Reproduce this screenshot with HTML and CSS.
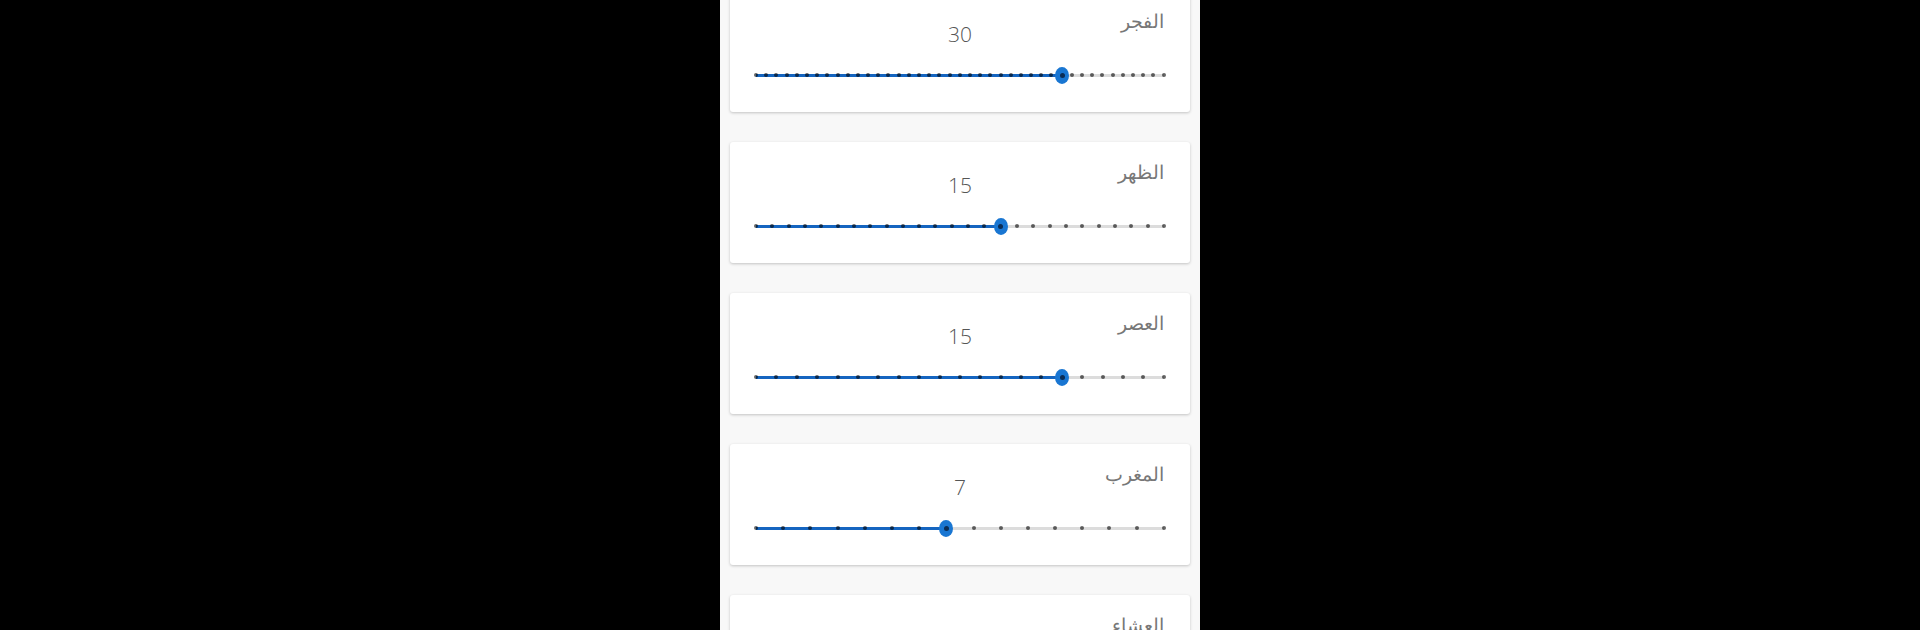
FILE: index.html
```html
<!DOCTYPE html>
<html lang="ar">
<head>
  <meta charset="utf-8">
  <meta name="viewport" content="width=device-width">
  <title>Prayer offsets</title>
  <link rel="stylesheet" href="styles.css">
</head>
<body>
  <main class="panel">
    <div class="list">
      <section class="card">
        <div class="card-head">
          <span class="value">30</span>
          <h2 class="title">الفجر</h2>
        </div>
        <div class="slider" data-max="40" data-value="30"></div>
      </section>

      <section class="card">
        <div class="card-head">
          <span class="value">15</span>
          <h2 class="title">الظهر</h2>
        </div>
        <div class="slider" data-max="25" data-value="15"></div>
      </section>

      <section class="card">
        <div class="card-head">
          <span class="value">15</span>
          <h2 class="title">العصر</h2>
        </div>
        <div class="slider" data-max="20" data-value="15"></div>
      </section>

      <section class="card">
        <div class="card-head">
          <span class="value">7</span>
          <h2 class="title">المغرب</h2>
        </div>
        <div class="slider" data-max="15" data-value="7"></div>
      </section>

      <section class="card">
        <div class="card-head">
          <span class="value">10</span>
          <h2 class="title">العشاء</h2>
        </div>
        <div class="slider" data-max="20" data-value="10"></div>
      </section>
    </div>
  </main>

  <script>
    document.querySelectorAll(".slider").forEach(function(el){
      let max = +el.dataset.max;
      let val = +el.dataset.value;
      let pct = val / max * 100;

      let track = document.createElement("div");
      track.className = "track";

      let fill = document.createElement("div");
      fill.className = "fill";
      fill.style.width = pct + "%";
      track.appendChild(fill);

      let ticks = document.createElement("div");
      ticks.className = "ticks";
      for(let i = 0; i <= max; i++){
        let t = document.createElement("span");
        t.className = "tick";
        ticks.appendChild(t);
      }
      track.appendChild(ticks);

      let thumb = document.createElement("span");
      thumb.className = "thumb";
      thumb.style.left = pct + "%";
      track.appendChild(thumb);

      el.appendChild(track);
    });
  </script>
</body>
</html>
```

FILE: styles.css
```css
html, body {
  margin: 0;
  height: 100%;
  background: #000;
  overflow: hidden;
}

.panel {
  display: flow-root;
  width: 480px;
  height: 100%;
  margin: 0 auto;
  background: #f8f8f8;
  font-family: "Open Sans", "DejaVu Sans", sans-serif;
}

.list {
  margin-top: -24px;
  padding: 0 10px;
}

.card {
  height: 121px;
  margin: 15px 0 30px;
  padding: 18px 26px 0;
  box-sizing: border-box;
  background: #fff;
  border-radius: 3px;
  box-shadow: 0 1px 3px rgba(0,0,0,.22);
}
.card + .card { margin-top: 0; }

.card-head {
  display: grid;
  grid-template-columns: 1fr auto 1fr;
  align-items: start;
  height: 37px;
}
.card-head .value {
  grid-column: 2;
  padding-top: 13px;
  font-size: 21px;
  line-height: 24px;
  font-weight: 300;
  color: #555;
}
.card-head .title {
  grid-column: 3;
  justify-self: end;
  margin: 0;
  font-size: 19px;
  line-height: 24px;
  font-weight: 300;
  color: #777;
}

.slider {
  margin-top: 19px;
  height: 20px;
  display: flex;
  align-items: center;
}

.track {
  position: relative;
  flex: 1;
  height: 3px;
  background: #dcdcdc;
}
.fill {
  height: 100%;
  background: #1565c0;
}

.ticks {
  position: absolute;
  top: 50%;
  left: -2px;
  right: -2px;
  display: flex;
  justify-content: space-between;
  transform: translateY(-50%);
}
.tick {
  width: 4px;
  height: 4px;
  border-radius: 50%;
  background: rgba(0,0,0,.6);
}

.thumb {
  position: absolute;
  top: 50%;
  width: 14px;
  height: 17px;
  margin-left: -7px;
  margin-top: -8.5px;
  border-radius: 50%;
  background: #1976d2;
}
.thumb::after {
  content: "";
  position: absolute;
  top: 50%; left: 50%;
  width: 5px; height: 5px;
  margin: -2.5px 0 0 -2.5px;
  border-radius: 50%;
  background: #0b2d55;
}
```
